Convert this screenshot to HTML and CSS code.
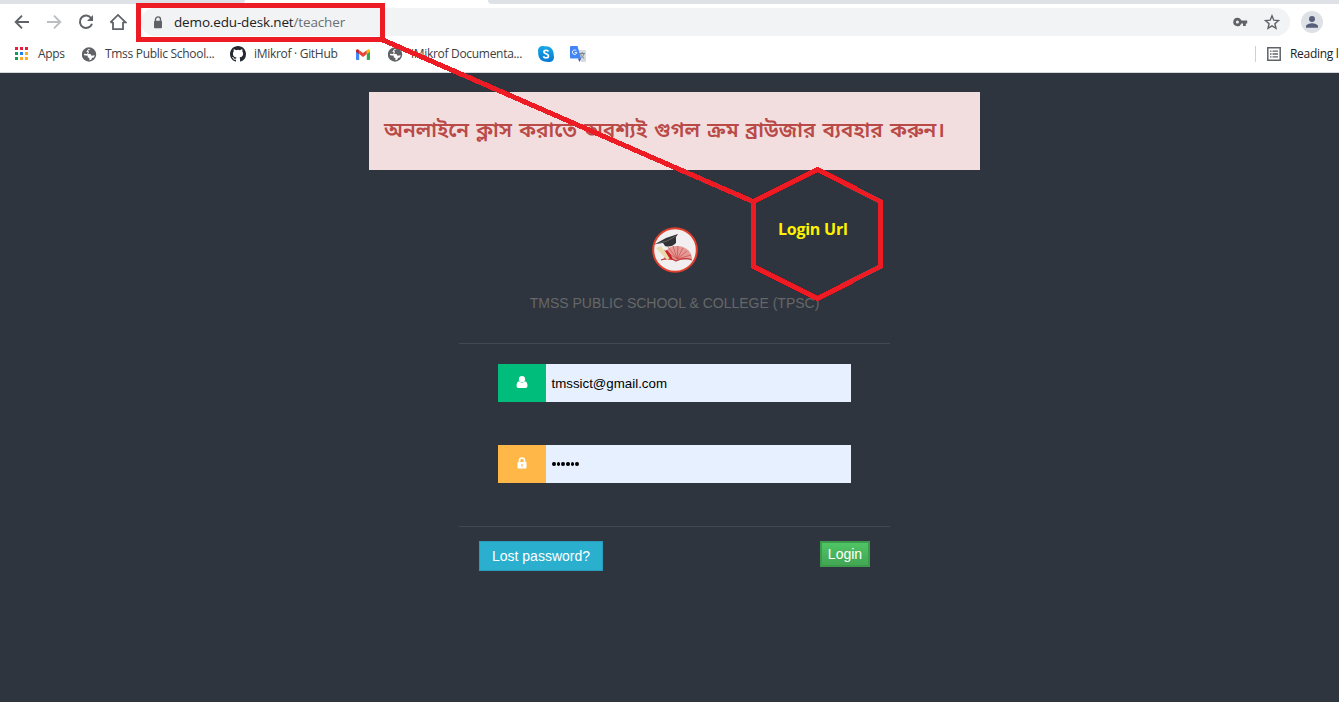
FILE: index.html
```html
<!DOCTYPE html>
<html lang="en">
<head>
<meta charset="utf-8">
<title>Teacher login</title>
<link rel="stylesheet" href="styles.css">
</head>
<body>
<div class="browser">
  <div class="tabstrip"><div class="tab-left"></div><div class="tab-active"></div><div class="tab-right"></div></div>
  <div class="toolbar">
    <div class="nav">
      <svg width="16" height="16" viewBox="0 0 16 16" fill="none" stroke="#5f6368" stroke-width="1.9"><path d="M15 8H2.2M8 1.7 1.7 8 8 14.3"/></svg>
      <svg width="16" height="16" viewBox="0 0 16 16" fill="none" stroke="#bcbec0" stroke-width="1.9"><path d="M1 8h12.8M8 1.7 14.3 8 8 14.3"/></svg>
      <svg width="16" height="16" viewBox="0 0 16 16"><path d="M13.2 4.2A6.2 6.2 0 1 0 14 9.7" fill="none" stroke="#5f6368" stroke-width="2"/><path d="M15 1v6H9z" fill="#5f6368"/></svg>
      <svg width="18" height="18" viewBox="0 0 18 18" fill="none" stroke="#5f6368" stroke-width="1.8"><path d="M4 9v7.100h10V9M1.400 9.400 9 1.900l7.600 7.500H14M4 9.400H1.400"/></svg>
    </div>
    <div class="omnibox">
      <svg class="lock" width="10" height="13" viewBox="0 0 10 13"><path d="M2.5 6V3.4a2.5 2.5 0 0 1 5 0V6" fill="none" stroke="#5f6368" stroke-width="1.4"/><rect x="1" y="4.8" width="8" height="7.4" rx="1" fill="#5f6368"/></svg>
      <div class="url">demo.edu-desk.net<span class="path">/teacher</span></div>
      <svg class="key" width="15" height="10" viewBox="0 0 15 10"><path fill="#5f6368" fill-rule="evenodd" d="M4.4.7a4.2 4.2 0 0 1 4 2.900H14.200v2.800h-1.400V9H10V6.400H8.400A4.200 4.200 0 1 1 4.400.7zm0 2.700a1.500 1.500 0 1 0 0 3 1.500 1.500 0 0 0 0-3z"/></svg>
      <svg class="star" width="16" height="16" viewBox="0 0 16 16"><path d="m8 1.800 1.800 4.400 4.700.4-3.600 3.100 1.100 4.600L8 11.800l-4 2.500 1.100-4.600-3.600-3.100 4.700-.4z" fill="none" stroke="#5f6368" stroke-width="1.400"/></svg>
    </div>
    <svg class="avatar" width="22" height="22" viewBox="0 0 22 22"><circle cx="11" cy="11" r="11" fill="#dee1e6"/><circle cx="11" cy="8" r="3" fill="#56607a"/><path d="M5 16.800v-1.500c0-2 4-3 6-3s6 1 6 3v1.500z" fill="#56607a"/></svg>
  </div>
  <div class="bookmarks">
    <div class="bm apps"><svg width="14" height="14" viewBox="0 0 14 14"><path fill="#ea1d3c" d="M0 0h3v3H0zM5 0h3v3H5zM10 0h3v3h-3z"/><path fill="#0d9d58" d="M0 5h3v3H0zM0 10h3v3H0z"/><path fill="#1a83f0" d="M5 5h3v3H5z"/><path fill="#fbab24" d="M10 5h3v3h-3zM5 10h3v3H5zM10 10h3v3h-3z"/></svg><span>Apps</span></div>
    <div class="bm school"><svg width="15" height="15" viewBox="0 0 15 15"><circle cx="7" cy="7.500" r="7.200" fill="#5f6368"/><path fill="#fff" d="M8.500 2 6 3.500 7 5 6 6.700l2.800.5.700 1.600 3.200-.6-.8 2.300-1.700.2-1 2.100-1.900.5.200-2-1.900-1.100.3-1.400-3.800-.6V6.700l2.800.4L6 5.800 4.400 4.400 6.500 2z"/></svg><span>Tmss Public School...</span></div>
    <div class="bm github"><svg width="16" height="16" viewBox="0 0 16 16"><path fill="#24292f" d="M8 0C3.58 0 0 3.58 0 8c0 3.54 2.29 6.53 5.47 7.59.4.07.55-.17.55-.38v-1.49c-2.01.37-2.53-.49-2.69-.94-.09-.23-.48-.94-.82-1.13-.28-.15-.68-.52-.01-.53.63-.01 1.08.58 1.23.82.72 1.21 1.87.87 2.33.66.07-.52.28-.87.51-1.07-1.78-.2-3.64-.89-3.64-3.95 0-.87.31-1.59.82-2.15-.08-.2-.36-1.02.08-2.12 0 0 .67-.21 2.2.82a7.5 7.5 0 0 1 4 0c1.53-1.04 2.2-.82 2.2-.82.44 1.1.16 1.92.08 2.12.51.56.82 1.27.82 2.15 0 3.07-1.87 3.75-3.65 3.95.29.25.54.73.54 1.48v2.2c0 .21.15.46.55.38A8 8 0 0 0 16 8c0-4.42-3.58-8-8-8z"/></svg><span>iMikrof · GitHub</span></div>
    <div class="bm gmail"><svg width="14" height="11" viewBox="0 0 14 11"><path fill="#4285f4" d="M0 2h3.2v9H1a1 1 0 0 1-1-1z"/><path fill="#34a853" d="M10.8 2H14v8a1 1 0 0 1-1 1h-2.2z"/><path fill="#ea4335" d="M3.2 1.2 7 4.1l3.8-2.900V5L7 7.900 3.200 5z"/><path fill="#c5221f" d="M0 1.700C0 .1 1.800-.3 3.200 1.200V5L0 2.700z"/><path fill="#fbbc04" d="M14 1.700c0-1.600-1.800-2-3.200-.5V5L14 2.700z"/></svg></div>
    <div class="bm docs"><svg width="15" height="15" viewBox="0 0 15 15"><circle cx="7" cy="7.500" r="7.200" fill="#5f6368"/><path fill="#fff" d="M8.500 2 6 3.500 7 5 6 6.700l2.800.5.700 1.600 3.200-.6-.8 2.300-1.700.2-1 2.100-1.900.5.200-2-1.900-1.100.3-1.400-3.800-.6V6.700l2.800.4L6 5.800 4.400 4.400 6.500 2z"/></svg><span>iMikrof Documenta...</span></div>
    <div class="bm skype"><svg width="16" height="16" viewBox="0 0 16 16"><defs><linearGradient id="sk" x1="0" y1="0" x2="0" y2="1"><stop offset="0" stop-color="#16a9e5"/><stop offset="1" stop-color="#0879d5"/></linearGradient></defs><path fill="url(#sk)" d="M4.5 0C6 0 6.500.3 8 .3c4.500 0 7.700 3.500 7.700 7.700 0 1.500.3 2 .3 3.500a4.500 4.500 0 0 1-4.500 4.500C10 16 9.500 15.700 8 15.700 3.700 15.700.3 12.300.3 8 .3 6.500 0 6 0 4.500A4.500 4.500 0 0 1 4.500 0z"/><path d="M10.400 5.500C9.500 3.700 5.800 3.900 5.900 6c.1 2.100 4.600 1.500 4.600 3.900 0 2.300-4.200 2.500-5.100.5" fill="none" stroke="#fff" stroke-width="1.700"/></svg></div>
    <div class="bm translate"><svg width="16" height="16" viewBox="0 0 16 16"><path fill="#d8dadd" d="M7 4h8.300q.7 0 .7.700V15q0 1-1 1h-4z"/><path d="M9.500 7.500H15M12.200 6v1.500M14 7.500c-.5 2.500-2 4-3.500 5M10.700 8c.5 2 2 3.500 3.500 4.500" fill="none" stroke="#75858b" stroke-width="1"/><path fill="#4285f4" d="M1 0h6.500L11 12.500H1q-1 0-1-1V1q0-1 1-1z"/><path fill="#3155b5" d="M8 12.500h3L9.500 16z"/><path d="M6.300 4.800a2.200 2.200 0 1 0 .5 1.800H4.700" fill="none" stroke="#fff" stroke-width="1"/></svg></div>
    <div class="reading"><svg width="14" height="14" viewBox="0 0 14 14"><path d="M.8.8h12.400v12.400H.8z" fill="none" stroke="#5f6368" stroke-width="1.500"/><path d="M3 4.200h1.500M3 7h1.500M3 9.800h1.500M5.500 4.200H11M5.500 7H11M5.500 9.800H11" stroke="#5f6368" stroke-width="1.300"/></svg><span>Reading list</span></div>
  </div>
</div>
<main class="page">
  <div class="alert" lang="bn"><span>অনলাইনে ক্লাস করাতে অবশ্যই গুগল ক্রম ব্রাউজার ব্যবহার করুন।</span></div>
  <svg class="logo" width="46" height="46" viewBox="0 0 46 46"><circle cx="23" cy="23" r="21.800" fill="#f1eff0" stroke="#e2402d" stroke-width="2"/><path d="M12 33C11 24 18 18 25 19c9 0 15 6 15 13l-15 1z" fill="#e49a96"/><path d="M25 32 12 23M25 32l-9-12M25 32l-4-13M25 32l1-13M25 32l6-11M25 32l10-8M25 32l14-4" stroke="#cc4a49" stroke-width=".7"/><path d="M9 33q9-3 15 1 8-4 16-1" fill="none" stroke="#bd3837" stroke-width="1.200"/><path d="m4 21 5-2 9 12-3 2z" fill="#eadbad"/><path d="m13 24 5 8 3 1-2-5-4-5z" fill="#c92226"/><path fill="#303235" d="m3 17 11-6 12-4-2 3v6q-5 5-11 3l-2-3z"/><path d="m3 17 12-3 9-5" fill="none" stroke="#777" stroke-width=".7"/></svg>
  <p class="school-name">TMSS PUBLIC SCHOOL &amp; COLLEGE (TPSC)</p>
  <form class="login">
    <div class="field">
      <div class="addon user"><svg width="12" height="12" viewBox="0 0 12 12" fill="#fff"><circle cx="6" cy="3.200" r="3.100"/><path d="M3 5.300Q.5 6 .5 10q0 2 2 2h7q2 0 2-2 0-4-2.500-4.700Q6 8 3 5.300z"/></svg></div>
      <div class="value">tmssict@gmail.com</div>
    </div>
    <div class="field">
      <div class="addon pass"><svg width="10" height="12" viewBox="0 0 10 12"><path d="M2.500 6V3.500a2.500 2.500 0 0 1 5 0V6" fill="none" stroke="#fff" stroke-width="1.600"/><rect x=".5" y="5" width="9" height="6.500" rx=".8" fill="#fff"/><path d="M5 7v2.800" stroke="#ffb848" stroke-width="1.200"/></svg></div>
      <div class="value dots"><i></i><i></i><i></i><i></i><i></i><i></i></div>
    </div>
  </form>
  <div class="actions"><div class="btn lost"><span>Lost password?</span></div><div class="btn go"><span>Login</span></div></div>
</main>
<svg class="annotation" width="1339" height="702" viewBox="0 0 1339 702" fill="none" stroke="#ed1c24" stroke-width="5" shape-rendering="crispEdges"><path d="M138.500 5.500h244v34h-244zM383 40l371 162M753.500 201.500l64-32 63 32v65l-63 32-64-32z"/></svg>
<div class="callout">Login Url</div>
</body>
</html>
```
FILE: styles.css
```css
* { box-sizing: border-box; }
body { margin: 0; width: 1339px; height: 702px; overflow: hidden; position: relative; background: #2e353f; font-family: "Liberation Sans", Arial, sans-serif; }
svg { display: block; flex: none; }
.browser { height: 73px; background: #fff; border-bottom: 1px solid #d5d7db; font-family: "Open Sans", "Noto Sans", sans-serif; }
.tabstrip { display: flex; height: 4px; background: #fff; }
.tab-left { width: 245px; background: #dee1e6; border-bottom-right-radius: 4px; }
.tab-active { width: 243px; }
.tab-right { flex: 1; background: #dee1e6; border-bottom-left-radius: 4px; }
.toolbar { display: flex; align-items: center; height: 36px; padding-left: 14px; }
.nav { display: flex; align-items: center; gap: 16px; width: 127px; }
.nav svg:last-child { margin-left: -1px; }
.omnibox { display: flex; align-items: center; width: 1149px; height: 28px; border-radius: 14px; background: #f1f3f4; padding-left: 12px; }
.url { margin-left: 11px; font-size: 13.5px; letter-spacing: -.15px; color: #202124; white-space: nowrap; }
.path { color: #6b6f73; }
.key { margin-left: auto; }
.star { margin: 0 10px 0 16px; }
.avatar { margin-left: 11px; }
.bookmarks { display: flex; align-items: center; height: 28px; padding-left: 15px; font-size: 12px; letter-spacing: -.3px; color: #3c4043; white-space: nowrap; }
.bookmarks span { padding-bottom: 1px; }
.bm, .reading { display: flex; align-items: center; }
.apps { width: 67px; gap: 9px; }
.school { width: 148px; gap: 8px; }
.github { width: 126px; gap: 8px; }
.gmail { width: 32px; }
.docs { width: 150px; gap: 8px; }
.skype { width: 32px; }
.reading { margin-left: auto; width: 84px; height: 16px; padding-left: 11px; gap: 9px; overflow: visible; border-left: 1px solid #cdd0d4; color: #202124; }
.page { display: flex; flex-direction: column; align-items: center; padding: 19px 0 0 10px; }
.alert { display: flex; align-items: center; width: 611px; height: 78px; padding: 0 15px; background: #f2dede; color: #b94a48; font-family: "Noto Sans Bengali", "Noto Sans", sans-serif; font-size: 20.8px; font-weight: 600; word-spacing: 1.7px; white-space: nowrap; }
.logo { margin-top: 57px; }
.school-name { margin: 22px 0 0; font-size: 14px; line-height: 16px; color: #666768; white-space: nowrap; }
.login { display: flex; flex-direction: column; gap: 43px; width: 431px; height: 184px; margin-top: 32px; padding: 20px 39px 0; border-top: 1px solid #414951; border-bottom: 1px solid #414951; }
.field { display: flex; width: 353px; height: 38px; }
.addon { display: flex; align-items: center; justify-content: center; width: 48px; padding-bottom: 2px; }
.user { background: #00bd7c; }
.pass { background: #ffb848; }
.value { display: flex; flex: 1; align-items: center; padding-left: 5.5px; background: #e6f0fe; color: #000; font-size: 13.3px; }
.dots { gap: 1px; padding-left: 6px; }
.dots i { width: 3.7px; height: 4px; border-radius: 50%; background: #000; }
.actions { display: flex; align-items: flex-start; justify-content: space-between; width: 391px; margin-top: 14px; }
.btn { display: flex; align-items: center; justify-content: center; color: #fff; font-size: 14px; white-space: nowrap; }
.lost { width: 124px; height: 30px; background: #2aafcf; border: 1px solid #269ebb; }
.go { width: 50px; height: 26px; background: linear-gradient(#50c465, #43a653); border: 2px solid #3b9a4b; }
.annotation { position: absolute; left: 0; top: 0; }
.callout { position: absolute; left: 778px; top: 218px; font: 700 16px/22px "Open Sans", "Noto Sans", sans-serif; letter-spacing: -.25px; color: #fff200; white-space: nowrap; }
```
